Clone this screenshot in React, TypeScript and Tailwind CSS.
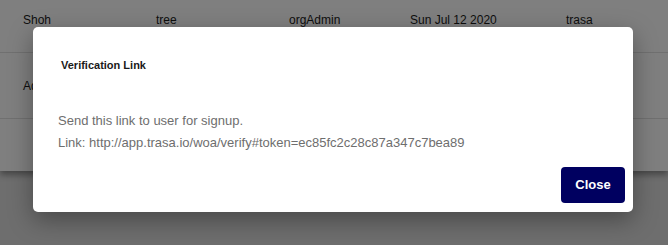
import { useState } from 'react'

const rows = [
  { name: 'Shoh', group: 'tree', role: 'orgAdmin', created: 'Sun Jul 12 2020', org: 'trasa' },
  { name: 'Adam', group: 'tree', role: 'orgAdmin', created: 'Sun Jul 12 2020', org: 'trasa' },
]

const link = 'http://app.trasa.io/woa/verify#token=ec85fc2c28c87a347c7bea89'

export default function App() {
  const [open, setOpen] = useState(true)

  return (
    <div className="relative h-[245px] w-[668px] overflow-hidden bg-[#dcdcdc] font-['Liberation_Sans',sans-serif]">
      <div className="-mt-[13px] bg-white shadow-[0_4px_6px_rgba(0,0,0,0.35)]">
        {rows.map((row) => (
          <div
            key={row.name}
            className="grid h-[66px] grid-cols-[133px_133px_121px_156px_1fr] items-center border-b border-[#e0e0e0] pl-[23px] text-[12px] text-[#1b1b1b]"
          >
            <span>{row.name}</span>
            <span>{row.group}</span>
            <span>{row.role}</span>
            <span>{row.created}</span>
            <span>{row.org}</span>
          </div>
        ))}
        <div className="h-[52px]" />
      </div>

      {open ? (
        <div className="absolute inset-0 bg-black/50">
          <div className="absolute left-[33px] top-[27px] h-[185px] w-[600px] rounded-[5px] bg-white shadow-[0_8px_24px_rgba(0,0,0,0.35)]">
            <h2 className="pl-[28px] pt-[30px] text-[11px] font-bold text-[#1a1a1a]">Verification Link</h2>
            <div className="pl-[25px] pt-[36px] text-[13px] leading-[22px] text-[#6e6e6e]">
              <p>Send this link to user for signup.</p>
              <p>Link: {link}</p>
            </div>
            <div className="flex justify-end pr-[8px] pt-[13px]">
              <button
                type="button"
                className="h-[36px] w-[64px] rounded-[4px] bg-[#000060] text-[13px] font-bold text-white"
                onClick={() => setOpen(false)}
              >
                Close
              </button>
            </div>
          </div>
        </div>
      ) : null}
    </div>
  )
}
